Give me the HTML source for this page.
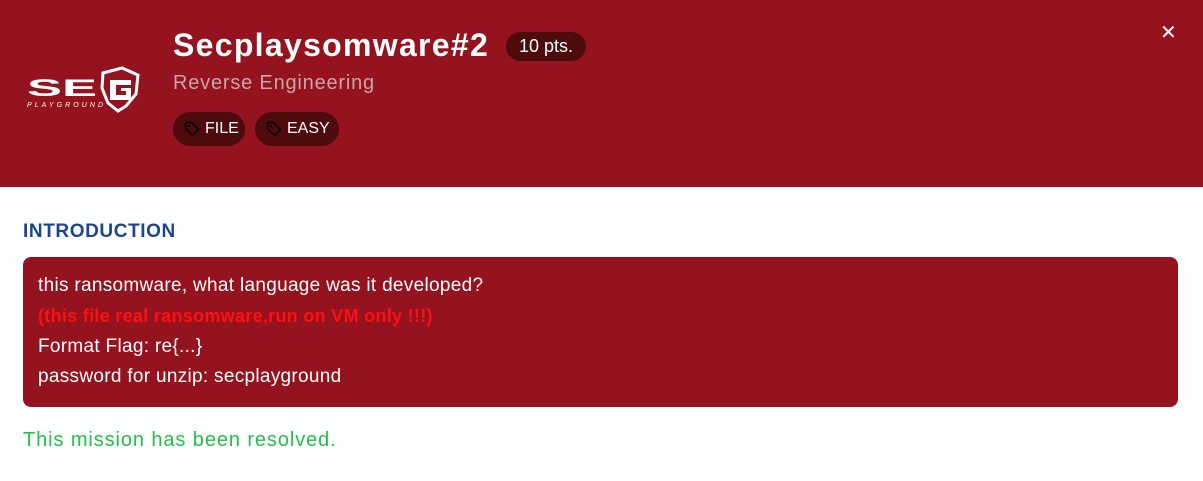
<!DOCTYPE html>
<html><head><style>
*{margin:0;padding:0;box-sizing:border-box}
body{width:1203px;height:481px;background:#fff;font-family:"Liberation Sans",sans-serif;position:relative;overflow:hidden}
.hd{position:absolute;left:0;top:0;width:1203px;height:187px;background:#95131e}
.t{position:absolute;left:173px;top:27px;color:#fff;font-size:32px;font-weight:bold;letter-spacing:1.3px}
.pts{position:absolute;left:506px;top:32px;width:80px;height:29px;border-radius:15px;background:#4e0b0e;color:#fff;font-size:18px;line-height:29px;text-align:center}
.sub{position:absolute;left:173px;top:72px;color:#c8a5a8;font-size:20px;letter-spacing:0.8px}
.tag{position:absolute;top:112px;height:34px;border-radius:17px;background:#4e0b0e;color:#fff;font-size:16px;line-height:34px;padding-left:32px}
.tag svg{position:absolute;left:11px;top:9px}
.x{position:absolute;left:1160px;top:20px;color:#fff;font-size:20px}
.intro{position:absolute;left:23px;top:221px;color:#1b4590;font-size:19px;font-weight:bold;letter-spacing:0.6px}
.box{position:absolute;left:23px;top:257px;width:1155px;height:150px;border-radius:8px;background:#95131e;color:#fff;font-size:19px;line-height:30px;padding:14px 15px;letter-spacing:0.3px}
.red{color:#ff1010;font-weight:bold;font-size:18px;letter-spacing:0.3px}
.ok{position:absolute;left:23px;top:429px;color:#22c04a;font-size:20px;letter-spacing:0.9px}
</style></head><body>
<div class="hd">
<svg style="position:absolute;left:26px;top:66px" width="116" height="48" viewBox="0 0 116 48">
<text x="1" y="30" fill="#fff" font-family="Liberation Sans" font-weight="bold" font-size="24" textLength="70" lengthAdjust="spacingAndGlyphs">SE</text>
<path d="M77 7 L96 2 L112 9 L110 28 L100 40 L92 45 L82 37 L76 22 Z" fill="none" stroke="#fff" stroke-width="3"/>
<path d="M84 14 L105 14 L105 19 L90 19 L90 29 L100 29 L100 25 L95 25 L95 22 L105 22 L105 34 L84 34 Z" fill="#fff"/>
<text x="1" y="41" fill="#fff" font-family="Liberation Sans" font-size="7" font-style="italic" textLength="76" lengthAdjust="spacing">PLAYGROUND</text>
</svg>
<div class="t">Secplaysomware#2</div>
<div class="pts">10 pts.</div>
<div class="sub">Reverse Engineering</div>
<div class="tag" style="left:173px;width:72px"><svg width="16" height="16" viewBox="0 0 16 16"><path d="M1.5 2.5v5l7 7 6-6-7-7h-5z" fill="none" stroke="#000" stroke-width="1.4"/><circle cx="5" cy="5" r="1.2" fill="#000"/></svg>FILE</div>
<div class="tag" style="left:255px;width:84px"><svg width="16" height="16" viewBox="0 0 16 16"><path d="M1.5 2.5v5l7 7 6-6-7-7h-5z" fill="none" stroke="#000" stroke-width="1.4"/><circle cx="5" cy="5" r="1.2" fill="#000"/></svg>EASY</div>
<div class="x">✕</div>
</div>
<div class="intro">INTRODUCTION</div>
<div class="box">this ransomware, what language was it developed?<br><span class="red">(this file real ransomware,run on VM only !!!)</span><br>Format Flag: re{...}<br>password for unzip: secplayground</div>
<div class="ok">This mission has been resolved.</div>
</body></html>
